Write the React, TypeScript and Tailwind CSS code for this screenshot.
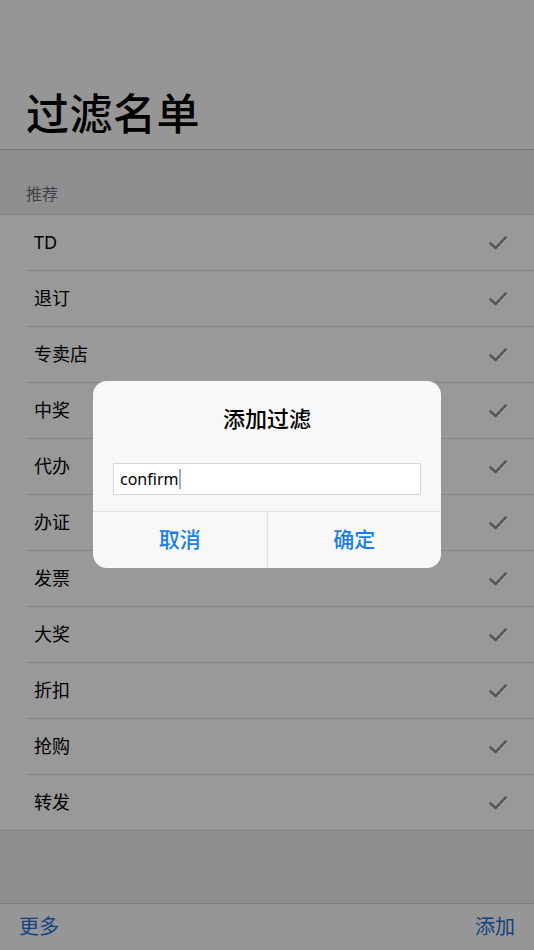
import React from "react";

const items = ["TD", "退订", "专卖店", "中奖", "代办", "办证", "发票", "大奖", "折扣", "抢购", "转发"];

const font = { fontFamily: '"Noto Sans", "Noto Sans CJK SC", sans-serif' };

function Check() {
  return (
    <svg width="18" height="14" viewBox="0 0 18 14" fill="none">
      <path d="M1.5 7.5 L6.5 12 L16.5 1.5" stroke="#8e8e93" strokeWidth="2.4" strokeLinecap="square" />
    </svg>
  );
}

export default function App() {
  return (
    <div className="relative w-[534px] h-[950px] overflow-hidden bg-white" style={font}>
      <div className="flex flex-col h-full">
        <div className="h-[150px] bg-[#fbfbfb] border-b border-[#c4c4c8] flex items-end pb-[14px] pl-[26px]">
          <div className="text-[43px] font-medium leading-none text-black tracking-[0.5px]">过滤名单</div>
        </div>
        <div className="h-[64px] bg-[#efeff4] flex items-end pb-[8px] pl-[26px]">
          <span className="text-[16px] text-[#6d6d72]">推荐</span>
        </div>
        <div className="bg-white border-t border-b border-[#dcdce0]">
          {items.map((t, i) => (
            <div key={t} className="pl-[26px]">
              <div
                className={
                  i < items.length - 1
                    ? "h-[56px] flex items-center justify-between pl-[8px] pr-[27px] border-b border-[#dcdce0]"
                    : "h-[55px] flex items-center justify-between pl-[8px] pr-[27px]"
                }
              >
                <span className="text-[18px] text-black">{t}</span>
                <Check />
              </div>
            </div>
          ))}
        </div>
        <div className="flex-1 bg-[#efeff4]" />
        <div className="h-[47px] bg-[#fbfbfb] border-t border-[#d0d0d4] flex items-center justify-between px-[19px]">
          <span className="text-[20px] text-[#1f6fd8]">更多</span>
          <span className="text-[20px] text-[#1f6fd8]">添加</span>
        </div>
      </div>

      <div className="absolute inset-0 bg-black/40" />

      <div className="absolute left-[93px] top-[381px] w-[348px] rounded-[14px] bg-[#f8f8f8] overflow-hidden">
        <div className="pt-[22px] text-center text-[22px] font-medium text-black leading-[30px]">添加过滤</div>
        <div className="px-[20px] pt-[30px] pb-[16px]">
          <div className="h-[32px] bg-white border border-[#d7d7d7] flex items-center pl-[6px]">
            <span className="text-[16px] text-black">confirm</span>
            <span className="w-[2px] h-[20px] bg-[#8fb0e8] ml-[1px]" />
          </div>
        </div>
        <div className="flex border-t border-[#e2e2e2] h-[57px]">
          <div className="flex-1 flex items-center justify-center text-[21px] font-medium text-[#1a7ee8]">取消</div>
          <div className="w-px bg-[#e2e2e2]" />
          <div className="flex-1 flex items-center justify-center text-[21px] font-medium text-[#1a7ee8]">确定</div>
        </div>
      </div>
    </div>
  );
}
